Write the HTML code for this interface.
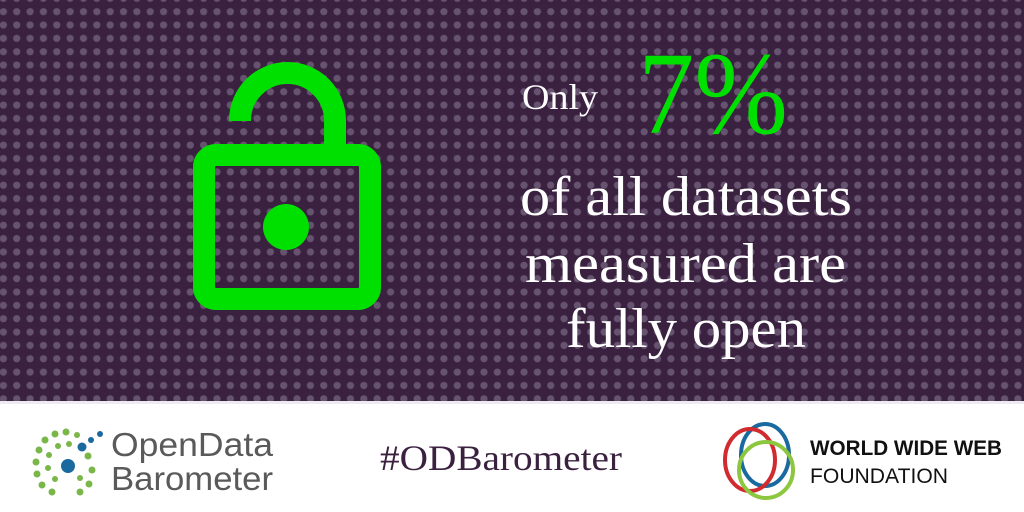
<!DOCTYPE html>
<html><head><meta charset="utf-8"><style>
html,body{margin:0;padding:0;width:1024px;height:512px;overflow:hidden;background:#fff}
svg{display:block}
</style></head><body>
<svg width="1024" height="512" viewBox="0 0 1024 512" xmlns="http://www.w3.org/2000/svg">
<defs>
<pattern id="dots" x="-3.3" y="5" width="13.35" height="13.35" patternUnits="userSpaceOnUse">
<circle cx="6.67" cy="6.67" r="3.6" fill="#66536f"/>
</pattern>
</defs>
<rect x="0" y="0" width="1024" height="401" fill="#3a2140"/>
<rect x="0" y="0" width="1024" height="401" fill="url(#dots)"/>
<rect x="0" y="401" width="1024" height="3" fill="#efeaf0"/>
<!-- lock -->
<path d="M240 121 V120.5 A47.5 47.5 0 0 1 335 120.5 V150" fill="none" stroke="#00e000" stroke-width="22"/>
<rect x="204" y="155" width="166" height="144" rx="12" fill="none" stroke="#00e000" stroke-width="22"/>
<circle cx="286" cy="227" r="23" fill="#00e000"/>
<!-- text -->
<g font-family="Liberation Serif, serif" fill="#fff">
<text x="522" y="109" font-size="36" textLength="76" lengthAdjust="spacingAndGlyphs">Only</text>
<text x="638" y="133" font-size="118" fill="#00e000" textLength="150" lengthAdjust="spacingAndGlyphs">7%</text>
<text x="520" y="215" font-size="56" textLength="332" lengthAdjust="spacingAndGlyphs">of all datasets</text>
<text x="525" y="282" font-size="56" textLength="321" lengthAdjust="spacingAndGlyphs">measured are</text>
<text x="566" y="347" font-size="56" textLength="240" lengthAdjust="spacingAndGlyphs">fully open</text>
</g>
<!-- ODB logo -->
<g fill="#7ab648">
<circle cx="36" cy="462" r="3.5"/><circle cx="37" cy="474" r="3.5"/><circle cx="39" cy="450" r="3.5"/>
<circle cx="42" cy="485" r="3.5"/><circle cx="45" cy="440" r="3.5"/><circle cx="52" cy="492" r="3.5"/>
<circle cx="55" cy="434" r="3.5"/><circle cx="66" cy="432" r="3.5"/><circle cx="49" cy="455" r="3"/>
<circle cx="48" cy="468" r="3"/><circle cx="55" cy="479" r="3"/><circle cx="58" cy="446" r="3"/>
<circle cx="77" cy="435" r="3"/><circle cx="88" cy="456" r="3.5"/><circle cx="92" cy="470" r="3.5"/>
<circle cx="89" cy="484" r="3.5"/><circle cx="80" cy="492" r="3.5"/><circle cx="80" cy="478" r="3"/>
<circle cx="69" cy="444" r="3"/>
</g>
<g fill="#1a6aa0">
<circle cx="68" cy="466" r="7"/><circle cx="82" cy="447" r="4.5"/><circle cx="91" cy="440" r="3"/><circle cx="100" cy="434" r="3"/>
</g>
<g font-family="Liberation Sans, sans-serif" fill="#5a5a5a" font-size="33">
<text x="111" y="456" textLength="162" lengthAdjust="spacingAndGlyphs">OpenData</text>
<text x="111" y="490" textLength="162" lengthAdjust="spacingAndGlyphs">Barometer</text>
</g>
<text x="380" y="470" font-family="Liberation Serif, serif" font-size="36" fill="#3a2140" textLength="242" lengthAdjust="spacingAndGlyphs">#ODBarometer</text>
<!-- WWW logo -->
<ellipse cx="765" cy="455" rx="24" ry="31" fill="none" stroke="#1a6aa0" stroke-width="4"/>
<ellipse cx="750" cy="460" rx="25" ry="31" fill="none" stroke="#d12a2f" stroke-width="4"/>
<ellipse cx="766" cy="470" rx="27" ry="28" fill="none" stroke="#8dc63f" stroke-width="4"/>
<g font-family="Liberation Sans, sans-serif" fill="#111" font-size="21">
<text x="810" y="455" font-weight="bold" textLength="192" lengthAdjust="spacingAndGlyphs">WORLD WIDE WEB</text>
<text x="810" y="483" textLength="138" lengthAdjust="spacingAndGlyphs">FOUNDATION</text>
</g>
</svg>
</body></html>
